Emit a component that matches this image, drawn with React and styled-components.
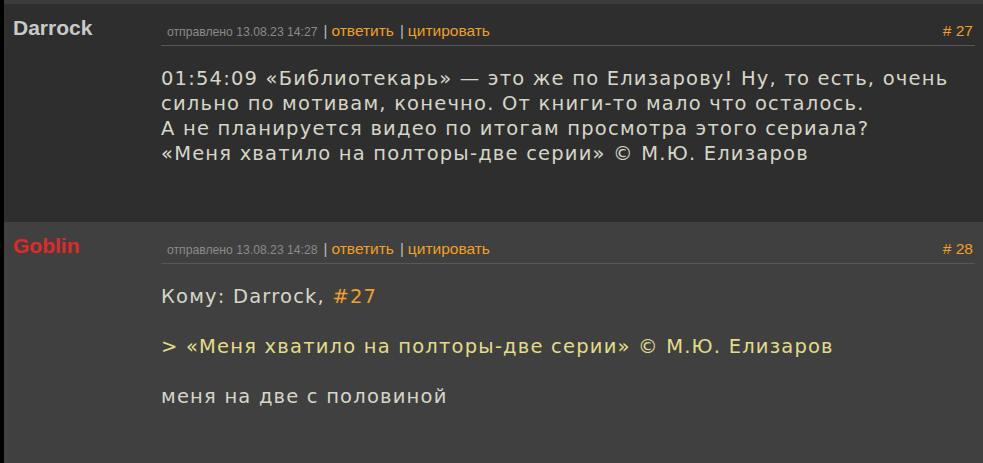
import React from "react";
import styled, { createGlobalStyle } from "styled-components";

const Global = createGlobalStyle`
  html, body { margin: 0; padding: 0; background: #000; }
  body { font-family: "Liberation Sans", Arial, sans-serif; }
`;

const Page = styled.div`
  width: 983px;
  height: 463px;
  overflow: hidden;
  background: #000;
  padding-left: 4px;
  box-sizing: border-box;
  display: flex;
  flex-direction: column;
`;

const TopBand = styled.div`
  height: 4px;
  background: #3b3b3b;
  flex: none;
`;

const Post = styled.div`
  display: grid;
  grid-template-columns: 157px 1fr;
  background: ${(p) => (p.$alt ? "#404040" : "#2e2e2e")};
  height: ${(p) => p.$h}px;
  flex: none;
  box-sizing: border-box;
  padding: 12px 8px 0 0;
`;

const Author = styled.div`
  font-family: "Liberation Sans", Arial, sans-serif;
  font-weight: bold;
  font-size: 21px;
  line-height: 24px;
  padding-left: 9px;
  color: ${(p) => (p.$red ? "#e3282a" : "#c9c9c9")};
`;

const Main = styled.div`
  display: flex;
  flex-direction: column;
`;

const Header = styled.div`
  display: flex;
  align-items: flex-end;
  justify-content: space-between;
  border-bottom: 1px solid #585858;
  padding: 0 2px 5px 6px;
  height: 25px;
  box-sizing: border-box;
  margin-top: 5px;
`;

const Meta = styled.div`
  display: flex;
  align-items: baseline;
`;

const Sent = styled.span`
  font-size: 12.2px;
  color: #8a8a8a;
`;

const Sep = styled.span`
  font-size: 15px;
  color: #bcbcbc;
  margin: 0 4px 0 6px;
`;

const Link = styled.a`
  font-size: 15.5px;
  color: #f0a123;
  text-decoration: none;
`;

const Num = styled.span`
  font-size: 15.5px;
  color: #f0a123;
`;

const Body = styled.div`
  padding: 20px 0 0 0;
  font-family: "DejaVu Sans", Verdana, sans-serif;
  font-size: 19.5px;
  letter-spacing: 1.2px;
  line-height: 25px;
  color: #d6d6c8;
`;

const Line = styled.div`
  min-height: 25px;
`;

const Quote = styled.div`
  color: #e2dd86;
`;

const Ref = styled.span`
  color: #f0a123;
`;

function PostHeader({ date, num }) {
  return (
    <Header>
      <Meta>
        <Sent>отправлено {date}</Sent>
        <Sep>|</Sep>
        <Link>ответить</Link>
        <Sep>|</Sep>
        <Link>цитировать</Link>
      </Meta>
      <Num># {num}</Num>
    </Header>
  );
}

export default function App() {
  return (
    <>
      <Global />
      <Page>
        <TopBand />
        <Post $h={218}>
          <Author>Darrock</Author>
          <Main>
            <PostHeader date="13.08.23 14:27" num="27" />
            <Body>
              <Line>01:54:09 «Библиотекарь» — это же по Елизарову! Ну, то есть, очень</Line>
              <Line>сильно по мотивам, конечно. От книги-то мало что осталось.</Line>
              <Line>А не планируется видео по итогам просмотра этого сериала?</Line>
              <Line>«Меня хватило на полторы-две серии» © М.Ю. Елизаров</Line>
            </Body>
          </Main>
        </Post>
        <Post $alt $h={241}>
          <Author $red>Goblin</Author>
          <Main>
            <PostHeader date="13.08.23 14:28" num="28" />
            <Body>
              <Line>Кому: Darrock, <Ref>#27</Ref></Line>
              <Line />
              <Quote>&gt; «Меня хватило на полторы-две серии» © М.Ю. Елизаров</Quote>
              <Line />
              <Line>меня на две с половиной</Line>
            </Body>
          </Main>
        </Post>
      </Page>
    </>
  );
}
